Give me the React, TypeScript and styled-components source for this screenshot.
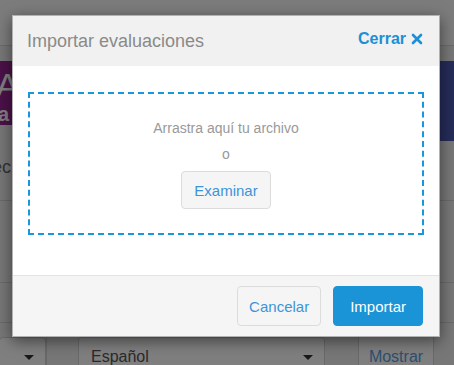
import React from "react";
import styled, { createGlobalStyle } from "styled-components";

const GlobalStyle = createGlobalStyle`
	html, body {
		margin: 0;
		padding: 0;
		height: 365px;
		overflow: hidden;
		font-family: "Liberation Sans", Arial, sans-serif;
	}
`;

const Page = styled.div`
	position: relative;
	width: 454px;
	height: 365px;
	overflow: hidden;
	background: #efefef;
`;

const TopBar = styled.div`
	height: 45px;
	background: #f8f8f8;
	border-bottom: 1px solid #d6d6d6;
`;

const Banner = styled.div`
	display: flex;
	align-items: flex-start;
	margin-top: 15px;
`;

const BannerLeft = styled.div`
	width: 220px;
	height: 64px;
	background: #962392;
	color: #fff;
`;

const BannerTitle = styled.div`
	font-size: 34px;
	line-height: 40px;
	margin-top: 4px;
	margin-left: -4px;
`;

const BannerSub = styled.div`
	font-size: 20px;
	font-weight: bold;
	line-height: 18px;
	margin-left: -2px;
`;

const BannerRight = styled.div`
	flex: 1;
	height: 80px;
	background: #4b59b0;
`;

const Section = styled.div<{ h: number }>`
	height: ${(p) => p.h}px;
	box-sizing: border-box;
	padding-bottom: 6px;
	border-bottom: 1px solid #d2d2d2;
	display: flex;
	align-items: center;
	font-size: 18px;
	color: #666;
	margin-left: -8px;
`;

const FormRow = styled.div`
	display: flex;
	align-items: flex-start;
	padding-top: 14px;
`;

const Select = styled.div<{ w: number; ml: number }>`
	width: ${(p) => p.w}px;
	margin-left: ${(p) => p.ml}px;
	height: 40px;
	box-sizing: border-box;
	border: 1px solid #d2d2d2;
	border-radius: 4px;
	background: #fff;
	display: flex;
	align-items: center;
	justify-content: space-between;
	padding: 0 11px 0 12px;
	font-size: 16px;
	color: #555;
`;

const Caret = styled.span`
	width: 0;
	height: 0;
	border-left: 5px solid transparent;
	border-right: 5px solid transparent;
	border-top: 5px solid #333;
`;

const Divider = styled.div<{ ml: number }>`
	width: 1px;
	height: 40px;
	background: #d2d2d2;
	margin-left: ${(p) => p.ml}px;
`;

const ShowButton = styled.div`
	width: 75px;
	height: 40px;
	box-sizing: border-box;
	border-right: 1px solid #d2d2d2;
	background: #fff;
	display: flex;
	align-items: center;
	justify-content: center;
	font-size: 16px;
	color: #5b9ede;
`;

const Overlay = styled.div`
	position: absolute;
	inset: 0;
	background: rgba(0, 0, 0, 0.5);
`;

const Modal = styled.div`
	width: 428px;
	margin: 15px 0 0 12px;
	box-sizing: border-box;
	background: #fff;
	border: 1px solid rgba(0, 0, 0, 0.3);
	box-shadow: 0 4px 14px rgba(0, 0, 0, 0.5);
`;

const Header = styled.div`
	height: 50px;
	background: #f1f1f1;
	display: flex;
	align-items: center;
	justify-content: space-between;
	padding: 0 16px 0 14px;
`;

const Title = styled.h4`
	margin: 0;
	font-size: 18px;
	font-weight: normal;
	color: #8a8a8a;
`;

const CloseLink = styled.a`
	display: flex;
	align-items: center;
	gap: 5px;
	font-size: 16px;
	font-weight: bold;
	color: #1b8fd7;
	text-decoration: none;
	margin-top: -5px;
`;

const Body = styled.div`
	padding: 26px 15px 40px;
`;

const DropZone = styled.div`
	height: 143px;
	box-sizing: border-box;
	border: 2px dashed #1a96dc;
	display: flex;
	flex-direction: column;
	align-items: center;
	justify-content: center;
	color: #999;
	font-size: 14px;
	line-height: 20px;
`;

const Or = styled.div`
	margin-top: 6px;
`;

const Button = styled.button<{ primary?: boolean }>`
	height: 40px;
	box-sizing: border-box;
	padding: 0 ${(p) => (p.primary ? 16 : 11)}px;
	font-family: inherit;
	font-size: 15px;
	border-radius: 4px;
	border: 1px solid ${(p) => (p.primary ? "#1a94d6" : "#dcdcdc")};
	background: ${(p) => (p.primary ? "#1a94d6" : "#f5f5f5")};
	color: ${(p) => (p.primary ? "#fff" : "#3d94d8")};
	cursor: pointer;
`;

const BrowseButton = styled(Button)`
	height: 38px;
	padding: 0 12px;
	margin-top: 7px;
`;

const Footer = styled.div`
	border-top: 1px solid #e3e3e3;
	background: #f5f5f5;
	display: flex;
	justify-content: flex-end;
	gap: 12px;
	padding: 10px 16px 10px;
`;

const CloseIcon = () => (
	<svg width="12" height="12" viewBox="0 0 12 12">
		<path d="M2 2L10 10M10 2L2 10" stroke="#1b8fd7" strokeWidth="2.6" strokeLinecap="round" />
	</svg>
);

export default function App() {
	return (
		<Page>
			<GlobalStyle />
			<TopBar />
			<Banner>
				<BannerLeft>
					<BannerTitle>A</BannerTitle>
					<BannerSub>a .</BannerSub>
				</BannerLeft>
				<BannerRight />
			</Banner>
			<Section h={60}>ec</Section>
			<Section h={82} />
			<Section h={40} />
			<FormRow>
				<Select w={47} ml={-1}>
					<span />
					<Caret />
				</Select>
				<Divider ml={0} />
				<Select w={247} ml={31}>
					<span>Español</span>
					<Caret />
				</Select>
				<Divider ml={33} />
				<ShowButton>Mostrar</ShowButton>
			</FormRow>
			<Overlay>
				<Modal>
					<Header>
						<Title>Importar evaluaciones</Title>
						<CloseLink href="#">
							Cerrar <CloseIcon />
						</CloseLink>
					</Header>
					<Body>
						<DropZone>
							<div>Arrastra aquí tu archivo</div>
							<Or>o</Or>
							<BrowseButton>Examinar</BrowseButton>
						</DropZone>
					</Body>
					<Footer>
						<Button>Cancelar</Button>
						<Button primary>Importar</Button>
					</Footer>
				</Modal>
			</Overlay>
		</Page>
	);
}
